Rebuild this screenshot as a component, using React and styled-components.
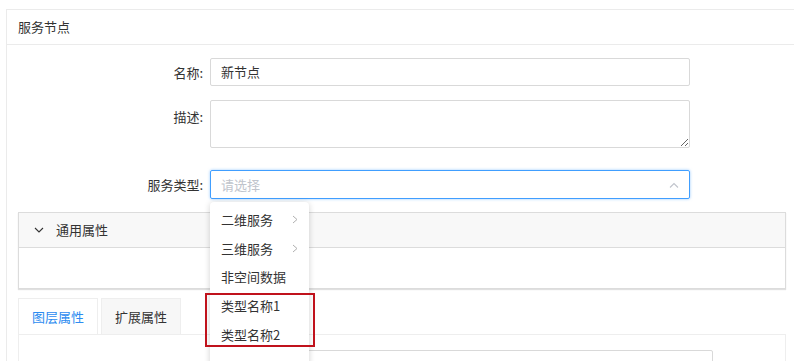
import React from "react";
import styled, { createGlobalStyle } from "styled-components";

const Global = createGlobalStyle`
  html, body { margin: 0; padding: 0; background: #fff; overflow: hidden; }
  body {
    font-family: "Noto Sans CJK SC", "Noto Sans", sans-serif;
    font-size: 13px;
    color: #333;
  }
  * { box-sizing: border-box; }
`;

const Page = styled.div`
  padding: 9px 0 0 6px;
  width: 820px;
`;

const Panel = styled.div`
  border: 1px solid #ebebeb;
  border-right: none;
  width: 812px;
  min-height: 400px;
`;

const PanelHeader = styled.div`
  height: 35px;
  line-height: 34px;
  padding-left: 11px;
  border-bottom: 1px solid #ebebeb;
`;

const PanelBody = styled.div`
  padding: 13px 0 0 11px;
  width: 780px;
`;

const Row = styled.div`
  display: flex;
  align-items: ${p => (p.top ? "flex-start" : "center")};
  margin-bottom: ${p => p.mb}px;
  position: relative;
`;

const Label = styled.label`
  width: 192px;
  padding-right: 7px;
  text-align: right;
  flex-shrink: 0;
  padding-top: ${p => (p.top ? "7px" : "0")};
`;

const Input = styled.div`
  width: 480px;
  height: 28px;
  border: 1px solid #d9d9d9;
  border-radius: 2px;
  padding-left: 10px;
  line-height: 26px;
`;

const TextArea = styled.textarea`
  width: 480px;
  height: 48px;
  border: 1px solid #d9d9d9;
  border-radius: 2px;
  font: inherit;
  resize: vertical;
  outline: none;
`;

const Select = styled.div`
  width: 480px;
  height: 29px;
  border: 1px solid #409eff;
  border-radius: 2px;
  box-shadow: 0 0 3px rgba(64, 158, 255, 0.55);
  padding: 0 10px;
  display: flex;
  align-items: center;
  justify-content: space-between;
  color: #c0c4cc;
`;

const Dropdown = styled.div`
  position: absolute;
  left: 192px;
  top: 32px;
  width: 99px;
  height: 200px;
  background: #fff;
  border-radius: 4px;
  box-shadow: 0 1px 6px rgba(0, 0, 0, 0.18);
  padding-top: 3px;
  z-index: 10;
`;

const Item = styled.div`
  height: 28.8px;
  padding: 0 11px;
  display: flex;
  align-items: center;
  justify-content: space-between;
  color: #333;
`;

const Highlight = styled.div`
  position: absolute;
  left: -5px;
  top: 91px;
  width: 110px;
  height: 54px;
  border: 2px solid #c0121c;
`;

const Collapse = styled.div`
  border: 1px solid #dcdcdc;
  box-shadow: 0 1px 1px rgba(0, 0, 0, 0.12);
  width: 768px;
`;

const CollapseHeader = styled.div`
  height: 35px;
  background: #f8f8f8;
  border-bottom: 1px solid #dcdcdc;
  display: flex;
  align-items: center;
  padding: 0 0 1px 15px;
  gap: 12px;
`;

const CollapseBody = styled.div`
  height: 40px;
`;

const Tabs = styled.div`
  display: flex;
  gap: 3px;
  margin-top: 9px;
`;

const Tab = styled.div`
  width: 80px;
  height: 36px;
  border: 1px solid #eeeeee;
  border-bottom: none;
  background: ${p => (p.active ? "#fff" : "#f7f7f7")};
  color: ${p => (p.active ? "#2d8cf0" : "#333")};
  display: flex;
  align-items: center;
  justify-content: center;
`;

const TabContent = styled.div`
  border: 1px solid #eeeeee;
  border-bottom: none;
  width: 768px;
  height: 60px;
  padding-top: 15px;
`;

const InnerRow = styled.div`
  display: flex;
`;

const InnerInput = styled.div`
  width: 502px;
  height: 28px;
  border: 1px solid #d9d9d9;
  border-radius: 2px;
`;

const Caret = ({ dir }) => (
  <svg width="10" height="6" viewBox="0 0 10 6">
    <path
      d={dir === "up" ? "M1 5.5L5 1.5L9 5.5" : "M1 1L5 5L9 1"}
      fill="none"
      stroke={dir === "up" ? "#c0c4cc" : "#333"}
      strokeWidth="1.1"
    />
  </svg>
);

const Chevron = () => (
  <svg width="6" height="9" viewBox="0 0 6 9">
    <path d="M1 1L5 4.5L1 8" fill="none" stroke="#b0b0b0" strokeWidth="1" />
  </svg>
);

const OPTIONS = [
  { name: "二维服务", sub: true },
  { name: "三维服务", sub: true },
  { name: "非空间数据" },
  { name: "类型名称1" },
  { name: "类型名称2" },
];

export default function App() {
  return (
    <>
      <Global />
      <Page>
        <Panel>
          <PanelHeader>服务节点</PanelHeader>
          <PanelBody>
            <Row mb={14}>
              <Label>名称:</Label>
              <Input>新节点</Input>
            </Row>
            <Row mb={22} top>
              <Label top>描述:</Label>
              <TextArea />
            </Row>
            <Row mb={13}>
              <Label>服务类型:</Label>
              <Select>
                <span>请选择</span>
                <Caret dir="up" />
              </Select>
              <Dropdown>
                {OPTIONS.map(o => (
                  <Item key={o.name}>
                    <span>{o.name}</span>
                    {o.sub && <Chevron />}
                  </Item>
                ))}
                <Highlight />
              </Dropdown>
            </Row>
            <Collapse>
              <CollapseHeader>
                <Caret dir="down" />
                <span>通用属性</span>
              </CollapseHeader>
              <CollapseBody />
            </Collapse>
            <Tabs>
              <Tab active>图层属性</Tab>
              <Tab>扩展属性</Tab>
            </Tabs>
            <TabContent>
              <InnerRow>
                <Label top>初始透明度</Label>
                <InnerInput />
              </InnerRow>
            </TabContent>
          </PanelBody>
        </Panel>
      </Page>
    </>
  );
}
